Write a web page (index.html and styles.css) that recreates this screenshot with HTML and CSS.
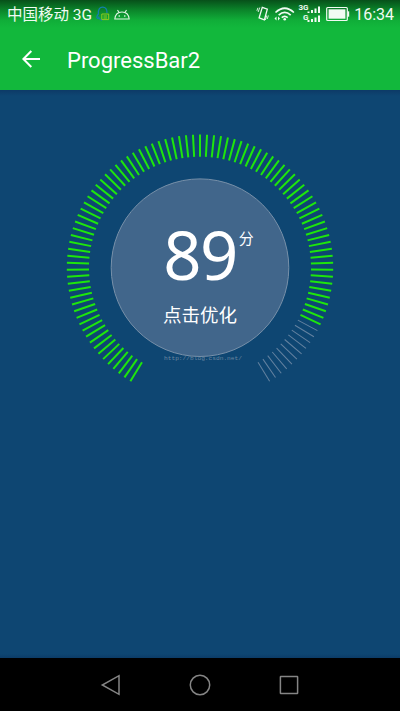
FILE: index.html
```html
<!DOCTYPE html>
<html lang="zh-CN">
<head>
<meta charset="utf-8">
<title>ProgressBar2</title>
<link rel="stylesheet" href="styles.css">
</head>
<body>
<div class="screen">
  <header class="top">
    <div class="status">
      <span class="carrier">中国移动 3G</span>
      <svg class="qq" width="14" height="16" viewBox="0 0 14 16" fill="none">
        <path d="M2.600 12.500C0 12.600.8 9.600 2.400 8 2 3 4 1.200 6.700 1.200S11.300 3 11 7M2.600 10.500C3 13 4 14 6 14" stroke="#137fae" stroke-width="1.300"/>
        <path d="M5.800 8h6.900v5.600H5.800zM7.500 10h3.500M7.500 12h3.500" stroke="#91c91f"/>
      </svg>
      <svg class="droid" width="16" height="12" viewBox="0 0 16 12" fill="none" stroke="#dff5e4" stroke-width="1.100">
        <path d="M.8 10C1.300 5.500 4.300 3 8 3s6.700 2.500 7.200 7zM3.500 1l1.700 2.700M12.500 1l-1.700 2.700"/>
        <path d="M4.600 7h1.300M10.100 7h1.300" stroke-width="1.300"/>
      </svg>
      <svg class="indicators" width="96" height="24" viewBox="254 2 96 24" fill="none" stroke="#f1fbf3">
        <path d="M262.300 7.300l5 1.900-2.900 10.600-5.300-2z" stroke-width="1.300"/>
        <path d="M259.800 7.500l-1.700 4.500M257.900 7.800l-1 3M266.700 15.500l-1.300 4.500M268.400 15.500l-1.200 3.500" stroke-width=".9"/>
        <g stroke-width="1.700"><path d="M275.500 12.500q9.200-8.500 18.400 0M278.700 15.200q6-5.500 12 0M281.700 17.600q3-2.600 6 0"/></g>
        <circle cx="284.700" cy="19.200" r="1.300" fill="#f1fbf3" stroke="none"/>
        <g fill="#f1fbf3" stroke="none">
          <path d="M274.500 18.500l2-2v4zM280 18.500l-2-2v4z"/>
          <text class="net" x="298.500" y="10">3G</text>
          <text class="net" x="303" y="19.500">G</text>
          <path d="M307.500 11.500h2v1.500h-2zM311 10h2v3h-2zM314.500 8.500h2v4.500h-2zM318 6.500h2v6.500h-2zM307.500 20h2v2h-2zM311 19h2v3h-2zM314.500 17.500h2v4.500h-2zM318 15.500h2v6.500h-2z"/>
          <path d="M328.600 9.300h16.800v9.400h-16.800z"/><path d="M347.600 11.300h1.600v5.400h-1.600z"/>
        </g>
        <rect x="326.700" y="7.500" width="20.600" height="13" rx="1" stroke-width="1.200"/>
      </svg>
      <span class="clock">16:34</span>
    </div>
    <div class="toolbar">
      <svg width="20" height="20" viewBox="0 0 20 20" fill="none" stroke="#fff" stroke-width="2"><path d="M19 10H3M10.300 2L2.400 10l7.900 8"/></svg>
      <h1>ProgressBar2</h1>
    </div>
  </header>
  <main>
    <div class="gauge">
      <svg id="dial" width="280" height="280" viewBox="-140 -139.700 280 280">
        <circle class="disc" r="88.800"/>
      </svg>
      <div class="reading">
        <div class="score"><span class="value">89</span><span class="unit">分</span></div>
        <div class="action">点击优化</div>
        <div class="mark">http://blog.csdn.net/</div>
      </div>
    </div>
  </main>
  <nav>
    <svg width="22" height="24" viewBox="0 0 22 24"><path d="M19 2.700v18.600L2.300 12z"/></svg>
    <svg width="22" height="24" viewBox="0 0 22 24"><circle cx="11" cy="12" r="9.700"/></svg>
    <svg width="22" height="24" viewBox="0 0 22 24"><rect x="2.400" y="3.400" width="17.200" height="17.200" rx=".5"/></svg>
  </nav>
</div>
<script src="dial.js"></script>
</body>
</html>
```
FILE: styles.css
```css
* { box-sizing: border-box; }
body { margin: 0; }
.screen {
  width: 400px;
  height: 711px;
  display: flex;
  flex-direction: column;
  overflow: hidden;
  color: #fff;
  font-family: Roboto, "Noto Sans CJK SC", sans-serif;
}
.top {
  height: 90px;
  background: linear-gradient(#07501a 0, #0b842a 10px, #10ad38 20px, #12b83c 28px);
}
.status {
  height: 30px;
  padding: 0 6px 0 7px;
  display: flex;
  align-items: center;
  color: #f1fbf3;
  font-size: 16px;
  line-height: 28px;
  white-space: nowrap;
}
.carrier { font-size: 15.500px; }
.qq { margin: -2px 0 0 4px; }
.droid { margin: -1px 0 0 4px; }
.indicators { margin-left: auto; margin-top: -2px; }
.clock { margin-left: 4px; font-size: 16px; }
.net { font: bold 8px Roboto, sans-serif; }
.toolbar {
  height: 58px;
  padding-left: 21px;
  display: flex;
  align-items: center;
  gap: 26px;
}
.toolbar h1 { margin: 2px 0 0; font-size: 22px; font-weight: 400; }
main {
  height: 568px;
  padding-top: 38px;
  background: linear-gradient(#0d3a67 0, #0e4672 6px, #0e4672 564px, #0c3c67 568px);
}
.gauge { position: relative; width: 280px; height: 280px; margin: 0 auto; }
#dial { display: block; }
.disc { fill: #41668b; stroke: #7790a9; stroke-width: 1; }
.done { stroke: #1ee60c; stroke-width: 2; }
.rest { stroke: #6482a0; stroke-width: 1; }
.reading {
  position: absolute;
  inset: 0;
  padding-top: 91px;
  display: flex;
  flex-direction: column;
  align-items: center;
}
.score { display: flex; height: 70px; padding-left: 17px; }
.value { font: 67px/70px "Noto Sans", sans-serif; letter-spacing: -1.500px; }
.unit { margin: 10px 0 0 2px; font-size: 15px; line-height: 20px; }
.action { margin-top: 14px; font-size: 18.500px; line-height: 26px; }
.mark {
  margin: 26px 0 0 6px;
  color: #6b86a0;
  font: 6.200px/8px "Liberation Mono", monospace;
}
nav {
  height: 53px;
  padding: 0 100px;
  display: flex;
  align-items: center;
  justify-content: space-between;
  background: #000;
}
nav svg { fill: none; stroke: #858585; stroke-width: 1.500; }
```
FILE: dial.js
```js
const dial = document.getElementById("dial");
const TICKS = 99;
const DONE = 88;
const STEP = 300 / 99;

for (let i = 0; i < TICKS; i++) {
  const line = document.createElementNS("http://www.w3.org/2000/svg", "line");
  line.setAttribute("y1", -133.2);
  line.setAttribute("y2", -111);
  line.setAttribute("transform", `rotate(${(i - 49) * STEP})`);
  line.setAttribute("class", i < DONE ? "done" : "rest");
  dial.appendChild(line);
}
```
